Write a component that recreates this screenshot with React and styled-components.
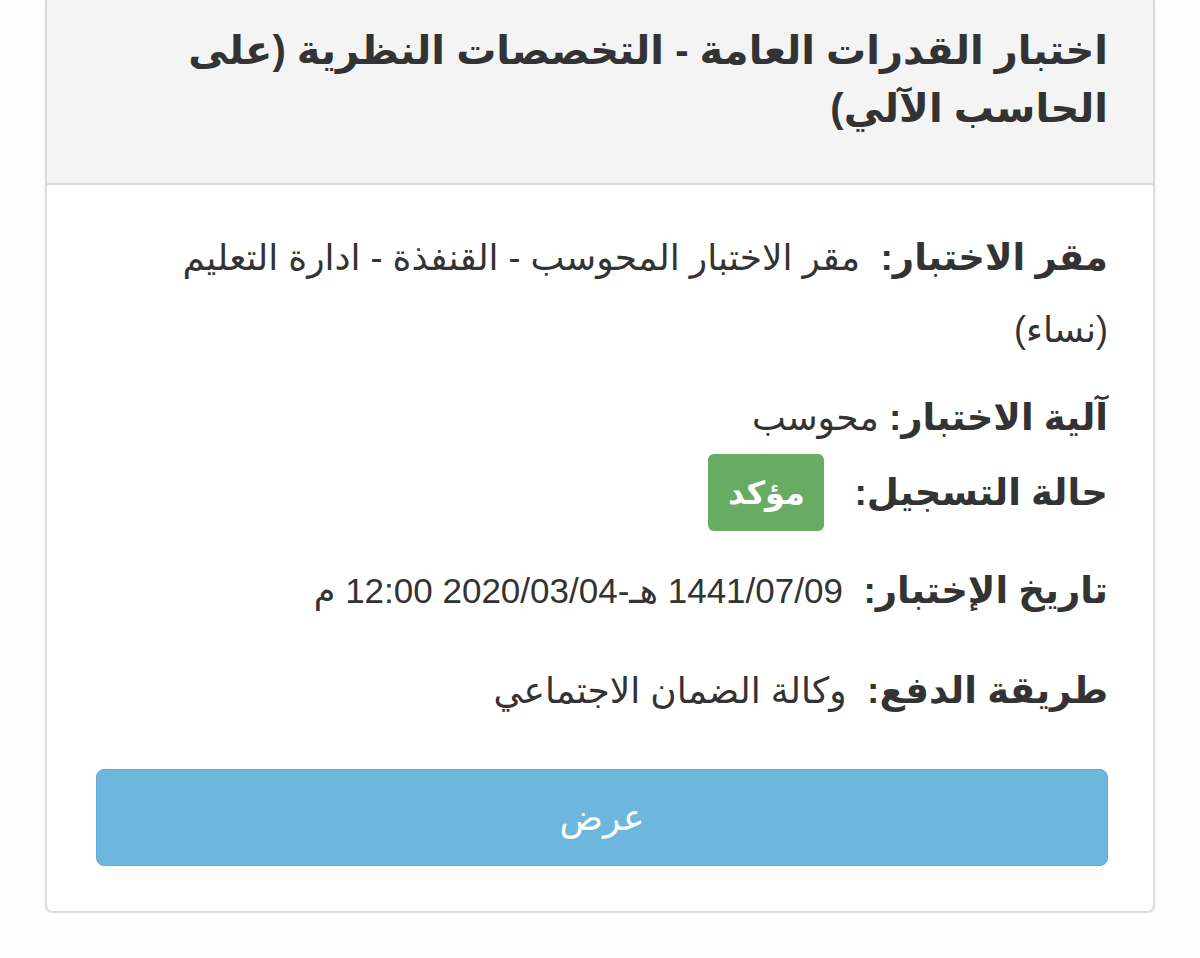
import React from "react";
import styled, { createGlobalStyle } from "styled-components";

const Global = createGlobalStyle`
  html, body { margin: 0; padding: 0; background: #fefefe; }
  body { font-family: "Liberation Sans", "DejaVu Sans", sans-serif; color: #333; }
`;

const Page = styled.div`
  direction: rtl;
  padding: 0 45px;
  width: 1200px;
  box-sizing: border-box;
`;

const Card = styled.div`
  background: #fff;
  border: 2px solid #dcdcdc;
  border-top: 0;
  border-radius: 0 0 8px 8px;
  box-shadow: 0 2px 3px rgba(0, 0, 0, 0.08);
  overflow: hidden;
`;

const Header = styled.div`
  background: #f4f4f4;
  border-bottom: 2px solid #dcdcdc;
  padding: 21px 45px 46px 45px;
`;

const Title = styled.h2`
  margin: 0;
  font-size: 40px;
  font-weight: bold;
  line-height: 58px;
  color: #333;
`;

const Body = styled.div`
  padding: 37px 45px 45px 49px;
`;

const Row = styled.div`
  font-size: 35px;
  line-height: 72px;
  margin-bottom: ${(p) => p.$gap || 0}px;
  display: ${(p) => (p.$flex ? "flex" : "block")};
  align-items: center;
  gap: 30px;
`;

const Label = styled.span`
  font-weight: bold;
  font-size: 37px;
  color: #333;
  white-space: pre;
`;

const Value = styled.span`
  color: #333;
  font-size: ${(p) => p.$size || 35}px;
`;

const Badge = styled.span`
  display: inline-flex;
  align-items: center;
  justify-content: center;
  background: #68ab62;
  color: #fff;
  font-weight: bold;
  font-size: 32px;
  width: 116px;
  height: 77px;
  border-radius: 6px;
  line-height: 1;
`;

const Button = styled.button`
  display: block;
  width: 100%;
  height: 97px;
  border: 1px solid #63acd6;
  border-radius: 8px;
  background: #6db6de;
  color: #fff;
  font-family: inherit;
  font-size: 36px;
  cursor: pointer;
`;

export default function App() {
  return (
    <>
      <Global />
      <Page>
        <Card>
          <Header>
            <Title>اختبار القدرات العامة - التخصصات النظرية (على الحاسب الآلي)</Title>
          </Header>
          <Body>
            <Row $gap={16}>
              <Label>{"مقر الاختبار:  "}</Label>
              <Value $size={36}>مقر الاختبار المحوسب - القنفذة - ادارة التعليم (نساء)</Value>
            </Row>
            <Row>
              <Label>{"آلية الاختبار: "}</Label>
              <Value $size={36}>محوسب</Value>
            </Row>
            <Row $flex $gap={24}>
              <Label>حالة التسجيل:</Label>
              <Badge>مؤكد</Badge>
            </Row>
            <Row $gap={28}>
              <Label>{"تاريخ الإختبار:  "}</Label>
              <Value>1441/07/09 هـ-2020/03/04 12:00 م</Value>
            </Row>
            <Row $gap={42}>
              <Label>{"طريقة الدفع:  "}</Label>
              <Value $size={36}>وكالة الضمان الاجتماعي</Value>
            </Row>
            <Button>عرض</Button>
          </Body>
        </Card>
      </Page>
    </>
  );
}
